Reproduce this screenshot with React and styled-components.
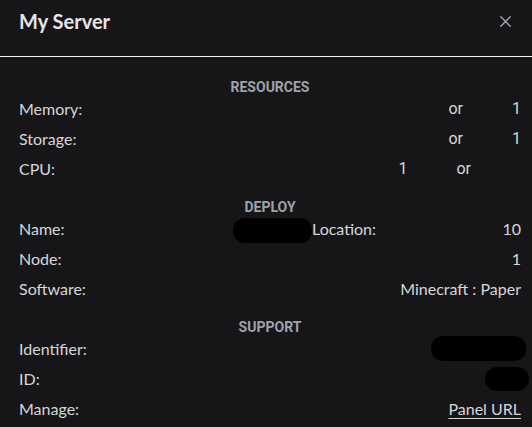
import React from 'react'
import styled, { createGlobalStyle } from 'styled-components'

const GlobalStyle = createGlobalStyle`
  html, body {
    margin: 0;
    padding: 0;
    background: #161618;
  }
`

const Panel = styled.div`
  width: 532px;
  height: 427px;
  overflow: hidden;
  background: #161618;
  font-family: Lato, "Noto Sans", sans-serif;
  color: #d6d6d8;
`

const Header = styled.header`
  box-sizing: border-box;
  height: 57px;
  padding: 9px 21px 0 19px;
  display: flex;
  align-items: flex-start;
  justify-content: space-between;
  border-bottom: 1px solid #f2f2f2;
`

const Title = styled.h1`
  margin: 0;
  font-size: 20px;
  line-height: 24px;
  font-weight: 700;
  color: #e6e6e8;
`

const Close = styled.button`
  margin-top: 7px;
  padding: 0;
  border: 0;
  background: none;
  width: 11px;
  height: 11px;
  display: flex;
  cursor: pointer;
`

const Body = styled.div`
  padding: 24px 11px 0 19px;
`

const Section = styled.section`
  & + & {
    margin-top: 17px;
  }
`

const Heading = styled.h2`
  margin: 0;
  height: 13px;
  line-height: 13px;
  text-align: center;
  font-family: Roboto, "Liberation Sans", sans-serif;
  font-size: 14px;
  font-weight: 700;
  color: #9ea2ab;
`

const Row = styled.div`
  height: 30px;
  line-height: 30px;
  display: flex;
  align-items: center;
  font-size: 16px;
`

const Label = styled.span`
  white-space: nowrap;
`

const Value = styled.span`
  margin-left: auto;
  display: flex;
  align-items: center;
  white-space: nowrap;
  font-family: ${p => (p.$plain ? 'Roboto, "Liberation Sans", sans-serif' : 'inherit')};
`

const Or = styled.span`
  margin: 0 ${p => p.$gap}px;
`

const Pair = styled.span`
  width: 209px;
  display: flex;
  justify-content: space-between;
`

const Blob = styled.span`
  display: inline-block;
  width: ${p => p.$w}px;
  height: ${p => p.$h}px;
  margin-right: ${p => p.$pull || 0}px;
  margin-top: ${p => p.$dy || 0}px;
  background: #000;
  border-radius: 12px;
`

const Link = styled.a`
  color: inherit;
  text-decoration: underline;
  text-underline-offset: 3px;
`

const CloseIcon = () => (
  <svg width="11" height="11" viewBox="0 0 11 11" fill="none">
    <path d="M0.8 0.8L10.2 10.2M10.2 0.8L0.8 10.2" stroke="#a3a6ae" strokeWidth="1.3" strokeLinecap="round" />
  </svg>
)

const App = () => (
  <Panel>
    <GlobalStyle />
    <Header>
      <Title>My Server</Title>
      <Close aria-label="Close"><CloseIcon /></Close>
    </Header>
    <Body>
      <Section>
        <Heading>RESOURCES</Heading>
        <Row>
          <Label>Memory:</Label>
          <Value $plain><span></span><Or $gap={49}>or</Or><span>1</span></Value>
        </Row>
        <Row>
          <Label>Storage:</Label>
          <Value $plain><span></span><Or $gap={49}>or</Or><span>1</span></Value>
        </Row>
        <Row>
          <Label>CPU:</Label>
          <Value $plain><span>1</span><Or $gap={49}>or</Or><span style={{ width: 1 }}></span></Value>
        </Row>
      </Section>
      <Section>
        <Heading>DEPLOY</Heading>
        <Row>
          <Label>Name:</Label>
          <Value>
            <Blob $w={79} $h={25} $dy={2} />
            <Pair>
              <Label>Location:</Label>
              <span>10</span>
            </Pair>
          </Value>
        </Row>
        <Row>
          <Label>Node:</Label>
          <Value>1</Value>
        </Row>
        <Row>
          <Label>Software:</Label>
          <Value>Minecraft : Paper</Value>
        </Row>
      </Section>
      <Section>
        <Heading>SUPPORT</Heading>
        <Row>
          <Label>Identifier:</Label>
          <Value><Blob $w={95} $h={25} $pull={-5} $dy={-2} /></Value>
        </Row>
        <Row>
          <Label>ID:</Label>
          <Value><Blob $w={44} $h={24} $pull={-8} /></Value>
        </Row>
        <Row>
          <Label>Manage:</Label>
          <Value><Link href="#">Panel URL</Link></Value>
        </Row>
      </Section>
    </Body>
  </Panel>
)

export default App
